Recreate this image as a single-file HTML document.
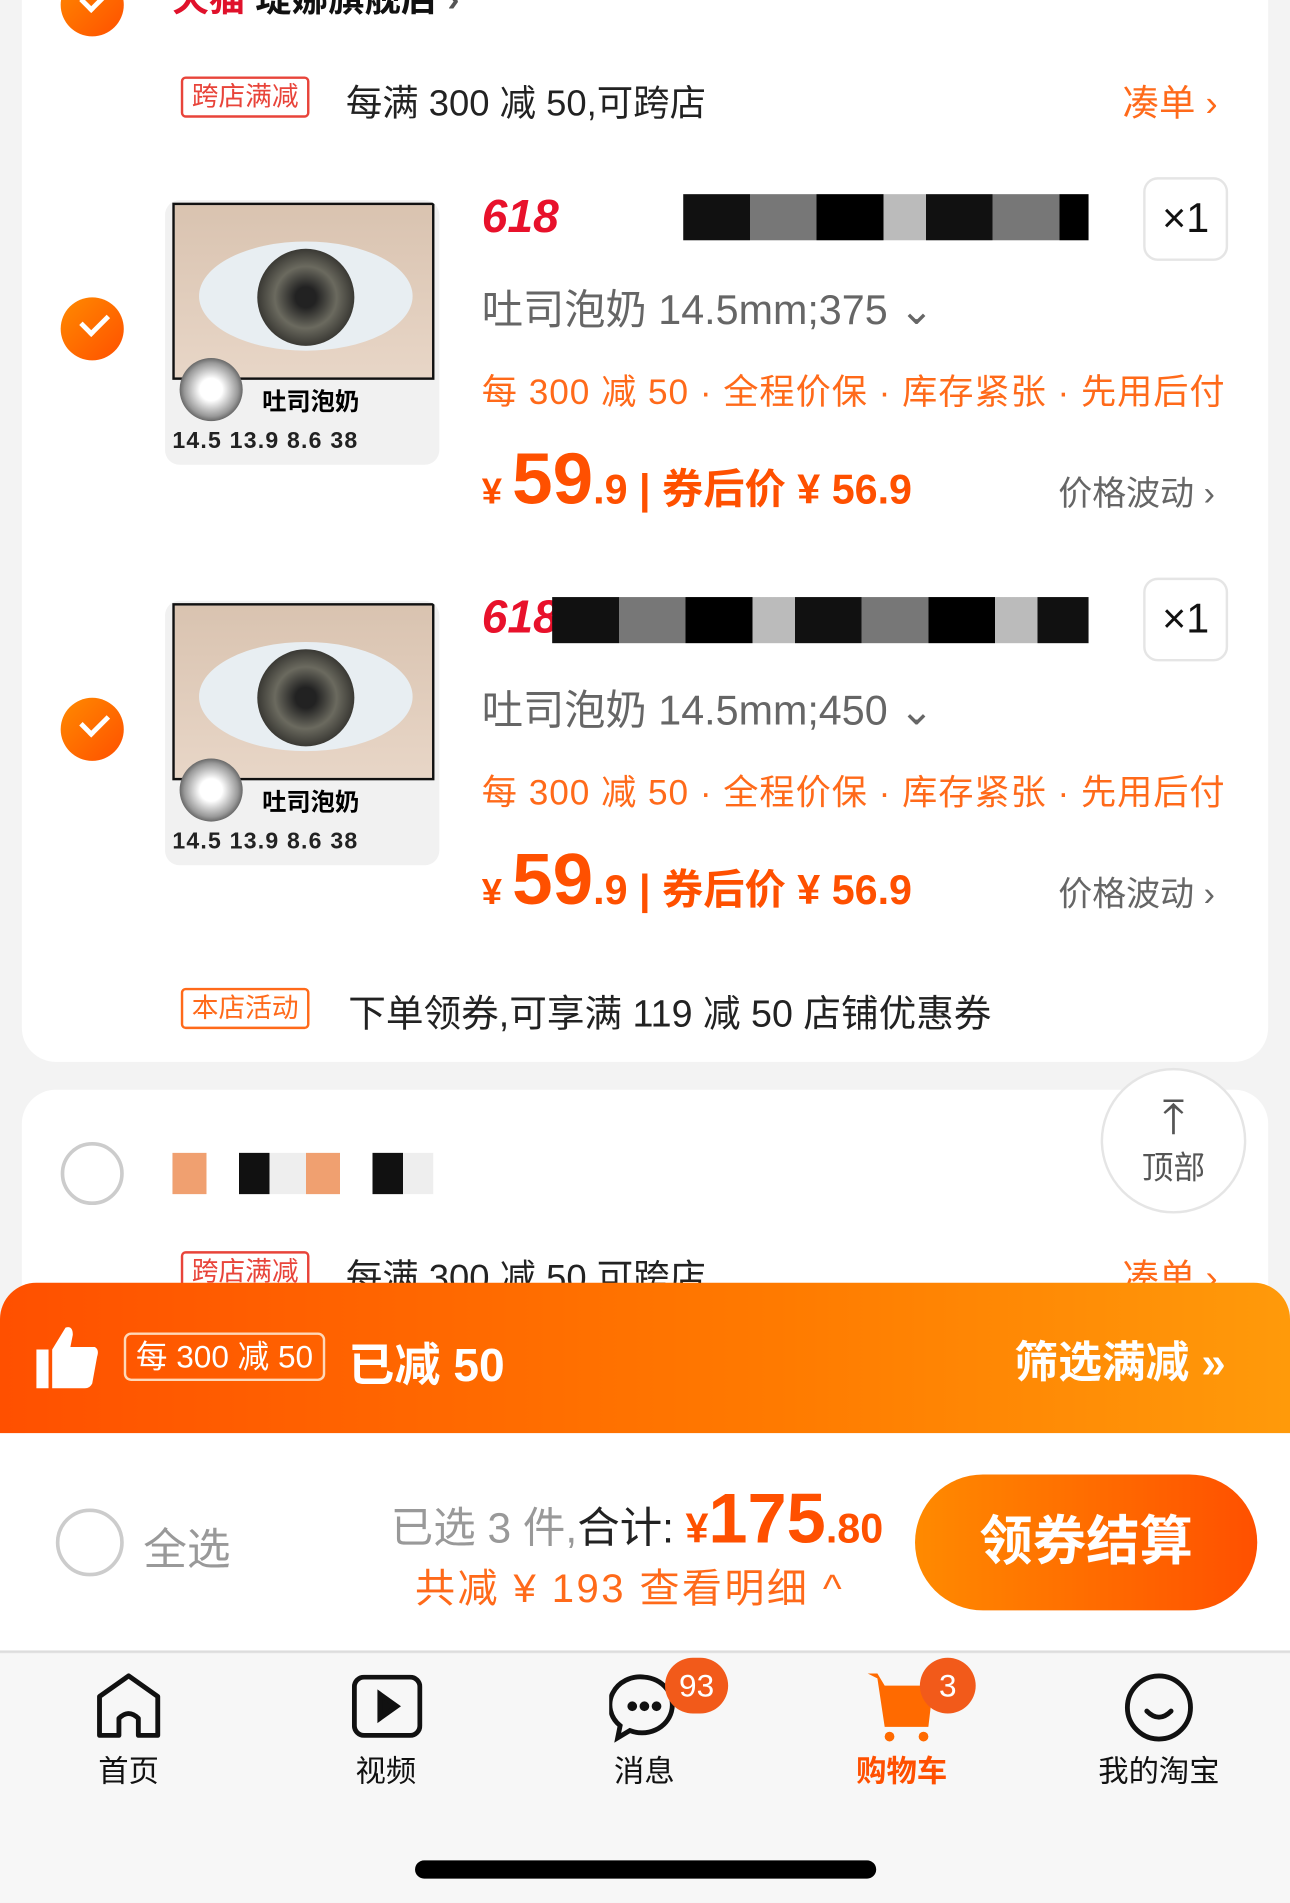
<!DOCTYPE html>
<html><head><meta charset="utf-8"><style>
*{margin:0;padding:0;box-sizing:border-box}
html,body{width:1290px;height:1903px;overflow:hidden;background:#f3f3f3}
#s{position:absolute;left:0;top:0;width:1063px;height:1568px;transform:scale(1.21355);transform-origin:0 0;font-family:"Liberation Sans","Noto Sans CJK SC",sans-serif;background:#f3f3f3}
.a{position:absolute;white-space:nowrap}
.card{position:absolute;left:18px;width:1027px;background:#fff;border-radius:28px}
.chk{position:absolute;width:52px;height:52px;border-radius:50%;background:linear-gradient(135deg,#ff8a00,#ff5000)}
.chk:after{content:"";position:absolute;left:17px;top:13px;width:18px;height:10px;border-left:4px solid #fff;border-bottom:4px solid #fff;transform:rotate(-45deg)}
.unc{position:absolute;width:52px;height:52px;border-radius:50%;border:3px solid #ccc;background:#fff}
.tag{position:absolute;border:2px solid #e8443a;color:#e8443a;font-size:22px;line-height:30px;padding:0 7px;border-radius:4px}
.img{position:absolute;width:226px;height:218px;border-radius:12px;background:#f1f1f1;overflow:hidden}
.eye{position:absolute;left:6px;top:2px;width:216px;height:146px;border:2px solid #111;background:linear-gradient(#d9c3b0,#e8d6c7)}
.eye i{position:absolute;left:68px;top:36px;width:80px;height:80px;border-radius:50%;background:radial-gradient(#222 15%,#6b6a5f 45%,#3b3a35 70%);}
.eye b{position:absolute;left:20px;top:30px;width:176px;height:90px;border-radius:50%;background:#e8eef2}
.lens{position:absolute;left:12px;top:130px;width:52px;height:52px;border-radius:50%;background:radial-gradient(#fff 25%,#999 60%,#555 75%,#ddd 80%)}
.spec{position:absolute;left:6px;top:188px;font-size:19px;font-weight:bold;color:#222;letter-spacing:1px}
.blur{position:absolute;height:38px;background:repeating-linear-gradient(90deg,#111 0 55px,#777 55px 110px,#000 110px 165px,#bbb 165px 200px)}
.qty{position:absolute;left:942px;width:70px;height:69px;border:2px solid #e5e5e5;border-radius:12px;font-size:34px;text-align:center;line-height:64px;color:#111}
.sku{font-size:34px;color:#666}
.promo{font-size:29px;color:#ff6a1a;letter-spacing:0.8px}
.pr{color:#ff5000;font-weight:bold}
.tab{position:absolute;top:1440px;font-size:25px;color:#111;width:120px;text-align:center}
</style></head><body><div id="s">
<div class="card" style="top:-40px;height:915px"></div>
<div class="chk" style="left:50px;top:-22px"></div>
<div class="a" style="left:142px;top:-18px;font-size:30px;font-weight:bold;line-height:36px"><span style="color:#e0112b">天猫</span> <span style="color:#111">瑅娜旗舰店</span> <span style="color:#555">›</span></div>
<div class="tag" style="left:149px;top:63px">跨店满减</div>
<div class="a" style="left:285px;top:60px;font-size:30px;color:#222">每满 300 减 50,可跨店</div>
<div class="a" style="left:925px;top:60px;font-size:30px;color:#ff6a1a">凑单 ›</div>

<div class="chk" style="left:50px;top:245px"></div>
<div class="img" style="left:136px;top:165px"><div class="eye"><b></b><i></i></div><div class="lens"></div><div class="a" style="left:80px;top:150px;font-size:20px;font-weight:bold">吐司泡奶</div><div class="spec">14.5 13.9 8.6 38</div></div>
<div class="a" style="left:397px;top:158px;font-size:38px;font-style:italic;font-weight:bold;color:#e8112b">618</div>
<div class="blur" style="left:563px;top:160px;width:334px"></div>
<div class="qty" style="top:146px">×1</div>
<div class="a sku" style="left:397px;top:228px">吐司泡奶 14.5mm;375 ⌄</div>
<div class="a promo" style="left:397px;top:300px">每 300 减 50 · 全程价保 · 库存紧张 · 先用后付</div>
<div class="a pr" style="left:397px;top:360px"><span style="font-size:30px">¥ </span><span style="font-size:60px">59</span><span style="font-size:34px">.9 | 券后价 ¥ 56.9</span></div>
<div class="a" style="left:872px;top:385px;font-size:28px;color:#666">价格波动 ›</div>

<div class="chk" style="left:50px;top:575px"></div>
<div class="img" style="left:136px;top:495px"><div class="eye"><b></b><i></i></div><div class="lens"></div><div class="a" style="left:80px;top:150px;font-size:20px;font-weight:bold">吐司泡奶</div><div class="spec">14.5 13.9 8.6 38</div></div>
<div class="a" style="left:397px;top:488px;font-size:38px;font-style:italic;font-weight:bold;color:#e8112b">618</div>
<div class="blur" style="left:455px;top:492px;width:442px"></div>
<div class="qty" style="top:476px">×1</div>
<div class="a sku" style="left:397px;top:558px">吐司泡奶 14.5mm;450 ⌄</div>
<div class="a promo" style="left:397px;top:630px">每 300 减 50 · 全程价保 · 库存紧张 · 先用后付</div>
<div class="a pr" style="left:397px;top:690px"><span style="font-size:30px">¥ </span><span style="font-size:60px">59</span><span style="font-size:34px">.9 | 券后价 ¥ 56.9</span></div>
<div class="a" style="left:872px;top:715px;font-size:28px;color:#666">价格波动 ›</div>

<div class="tag" style="left:149px;top:814px;border-color:#ff6a1a;color:#ff6a1a">本店活动</div>
<div class="a" style="left:287px;top:810px;font-size:31px;color:#222">下单领券,可享满 119 减 50 店铺优惠券</div>

<div class="card" style="top:898px;height:300px"></div>
<div class="unc" style="left:50px;top:941px"></div>
<div class="a" style="left:142px;top:950px;width:215px;height:34px;background:repeating-linear-gradient(90deg,#f0a070 0 28px,#fff 28px 55px,#111 55px 80px,#eee 80px 110px)"></div>
<div class="a" style="left:907px;top:880px;width:120px;height:120px;border-radius:50%;background:#fff;border:2px solid #e5e5e5;text-align:center;color:#555;font-size:26px;padding-top:18px"><div style="font-size:40px;line-height:42px">⤒</div>顶部</div>
<div class="tag" style="left:149px;top:1031px">跨店满减</div>
<div class="a" style="left:285px;top:1028px;font-size:30px;color:#222">每满 300 减 50,可跨店</div>
<div class="a" style="left:925px;top:1028px;font-size:30px;color:#ff6a1a">凑单 ›</div>

<div class="a" style="left:0;top:1057px;width:1063px;height:124px;border-radius:30px 30px 0 0;background:linear-gradient(90deg,#ff5000,#ff7a00 60%,#ff9a0a)"></div>
<svg class="a" style="left:28px;top:1090px" width="56" height="56" viewBox="0 0 56 56"><path d="M2 22h10v32H2z M15 22 L26 4 Q32 2 32 10 L30 20 H50 Q54 22 52 28 L48 50 Q46 54 42 54 H15z" fill="#fff"/></svg>
<div class="a" style="left:102px;top:1098px;border:2px solid #ffd8b8;border-radius:6px;color:#fff;font-size:26px;line-height:36px;padding:0 8px">每 300 减 50</div>
<div class="a" style="left:287px;top:1094px;color:#fff;font-size:38px;font-weight:bold">已减 50</div>
<div class="a" style="left:836px;top:1094px;color:#fff;font-size:36px;font-weight:bold">筛选满减 »</div>

<div class="a" style="left:0;top:1181px;width:1063px;height:181px;background:#fff;border-bottom:2px solid #ddd"></div>
<div class="unc" style="left:46px;top:1243px;width:56px;height:56px"></div>
<div class="a" style="left:118px;top:1248px;font-size:36px;color:#999">全选</div>
<div class="a" style="left:322px;top:1218px;font-size:35px;color:#999">已选 3 件,<span style="color:#222">合计:</span><span class="pr" style="font-size:34px"> ¥</span><span class="pr" style="font-size:58px">175</span><span class="pr" style="font-size:34px">.80</span></div>
<div class="a" style="left:342px;top:1282px;font-size:33px;color:#ff6a1a;letter-spacing:2px">共减 ¥ 193 查看明细 ^</div>
<div class="a" style="left:754px;top:1215px;width:282px;height:112px;border-radius:56px;background:linear-gradient(90deg,#ff8a00,#ff5000);color:#fff;font-size:44px;font-weight:bold;text-align:center;line-height:112px">领券结算</div>

<div class="a" style="left:0;top:1363px;width:1063px;height:205px;background:#f7f7f7"></div>
<svg class="a" style="left:78px;top:1378px" width="56" height="56" viewBox="0 0 56 56" fill="none" stroke="#111" stroke-width="4"><path d="M4 52V20L28 3 52 20V52H36V38Q28 30 20 38V52Z" stroke-linejoin="round"/></svg>
<svg class="a" style="left:290px;top:1380px" width="58" height="54" viewBox="0 0 58 54" fill="none" stroke="#111" stroke-width="4"><rect x="2" y="2" width="54" height="48" rx="8"/><path d="M23 16v20l14-10z" fill="#111"/></svg>
<svg class="a" style="left:502px;top:1378px" width="58" height="58" viewBox="0 0 58 58" fill="none" stroke="#111" stroke-width="4"><path d="M29 4a25 23 0 1 1-12 44l-10 6 2-10A25 23 0 0 1 29 4z"/><circle cx="19" cy="28" r="2" fill="#111"/><circle cx="29" cy="28" r="2" fill="#111"/><circle cx="39" cy="28" r="2" fill="#111"/></svg>
<div class="a" style="left:548px;top:1366px;width:52px;height:46px;border-radius:23px;background:#f25a1a;color:#fff;font-size:26px;text-align:center;line-height:46px">93</div>
<svg class="a" style="left:713px;top:1375px" width="60" height="62" viewBox="0 0 60 62"><path d="M2 4h8l6 10h40l-4 34H16L10 8" fill="#ff6a00"/><circle cx="20" cy="56" r="4" fill="#ff6a00"/><circle cx="48" cy="56" r="4" fill="#ff6a00"/></svg>
<div class="a" style="left:758px;top:1366px;width:46px;height:46px;border-radius:50%;background:#f25a1a;color:#fff;font-size:26px;text-align:center;line-height:46px">3</div>
<svg class="a" style="left:926px;top:1378px" width="58" height="58" viewBox="0 0 58 58" fill="none" stroke="#111" stroke-width="4"><circle cx="29" cy="29" r="26"/><path d="M19 32q10 10 20 0" stroke-linecap="round"/></svg>
<div class="tab" style="left:46px">首页</div>
<div class="tab" style="left:258px">视频</div>
<div class="tab" style="left:471px">消息</div>
<div class="tab" style="left:683px;color:#ff5000;font-weight:bold">购物车</div>
<div class="tab" style="left:895px">我的淘宝</div>
<div class="a" style="left:342px;top:1533px;width:380px;height:15px;border-radius:8px;background:#000"></div>
</div></body></html>
